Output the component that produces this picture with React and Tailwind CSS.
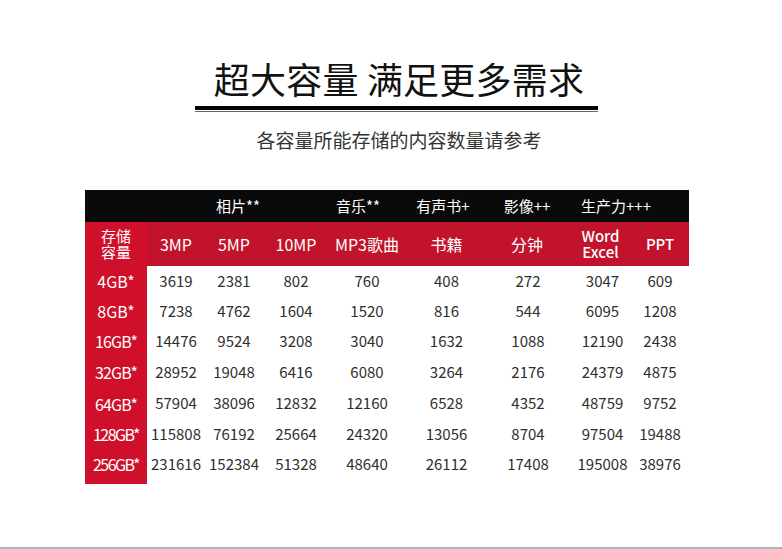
const cols = "grid grid-cols-[62px_58px_58px_66px_76px_83px_78px_65px_58px]";

const rows = [
  { size: "4GB*", h: "h-[30px]", t: "", v: ["3619", "2381", "802", "760", "408", "272", "3047", "609"] },
  { size: "8GB*", h: "h-[30px]", t: "", v: ["7238", "4762", "1604", "1520", "816", "544", "6095", "1208"] },
  { size: "16GB*", h: "h-[30px]", t: "tracking-[-0.8px]", v: ["14476", "9524", "3208", "3040", "1632", "1088", "12190", "2438"] },
  { size: "32GB*", h: "h-[32px]", t: "tracking-[-0.8px]", v: ["28952", "19048", "6416", "6080", "3264", "2176", "24379", "4875"] },
  { size: "64GB*", h: "h-[31px]", t: "tracking-[-0.8px]", v: ["57904", "38096", "12832", "12160", "6528", "4352", "48759", "9752"] },
  { size: "128GB*", h: "h-[30px]", t: "tracking-[-1.5px]", v: ["115808", "76192", "25664", "24320", "13056", "8704", "97504", "19488"] },
  { size: "256GB*", h: "h-[30px]", t: "tracking-[-1.5px]", v: ["231616", "152384", "51328", "48640", "26112", "17408", "195008", "38976"] },
];

const cellPad = ["", "", "", "", "", "pl-[2px]", "pl-[8px]", ""];

export default function App() {
  return (
    <div
      className="w-full h-[549px] bg-white border-b-2 border-[#b4b4b4] flex flex-col items-center"
      style={{ fontFamily: '"Noto Sans CJK SC", "Noto Sans", sans-serif' }}
    >
      <h1 className="mt-[60px] ml-[16px] text-[36px] leading-[36px] font-normal text-[#111] tracking-[0.2px]">
        超大容量 满足更多需求
      </h1>
      <div className="mt-[10px] ml-[10px] w-[403px] flex flex-col">
        <div className="h-[4px] bg-black" />
        <div className="h-[1px] bg-white" />
        <div className="h-[1px] bg-[#666]" />
      </div>
      <p className="mt-[18px] ml-[16px] text-[19px] leading-[20px] text-[#333]">
        各容量所能存储的内容数量请参考
      </p>

      <div className="mt-[40px] self-start ml-[85px] w-[604px] flex flex-col">
        <div className={`${cols} h-[32px] bg-[#0a0a0a] text-white text-[15px] items-center`}>
          <div />
          <div className="col-span-3 text-center">相片**</div>
          <div className="text-center pr-[18px]">音乐**</div>
          <div className="text-center pr-[7px]">有声书+</div>
          <div className="text-center">影像++</div>
          <div className="col-span-2 text-center pr-[23px]">生产力+++</div>
        </div>

        <div className={`${cols} h-[44px] bg-[#c1132b] text-white text-[16px]`}>
          <div className="bg-[#d0102a] flex items-center justify-center text-center text-[15px] leading-[16px]">
            <span>
              存储
              <br />
              容量
            </span>
          </div>
          <div className="flex items-center justify-center">3MP</div>
          <div className="flex items-center justify-center">5MP</div>
          <div className="flex items-center justify-center">10MP</div>
          <div className="flex items-center justify-center">MP3歌曲</div>
          <div className="flex items-center justify-center">书籍</div>
          <div className="flex items-center justify-center">分钟</div>
          <div className="flex items-center justify-center text-center leading-[16px] font-medium text-[15px] pl-[4px]">
            <span>
              Word
              <br />
              Excel
            </span>
          </div>
          <div className="flex items-center justify-center font-medium text-[15px]">PPT</div>
        </div>

        {rows.map((r) => (
          <div key={r.size} className={`${cols} ${r.h} text-[15px] text-[#2e2e2e]`}>
            <div className={`bg-[#d0102a] text-white text-[16px] flex items-center justify-center ${r.t}`}>
              {r.size}
            </div>
            {r.v.map((n, i) => (
              <div key={i} className={`flex items-center justify-center ${cellPad[i]}`}>
                {n}
              </div>
            ))}
          </div>
        ))}
        <div className={`${cols} h-[5px]`}>
          <div className="bg-[#d0102a]" />
        </div>
      </div>
    </div>
  );
}
